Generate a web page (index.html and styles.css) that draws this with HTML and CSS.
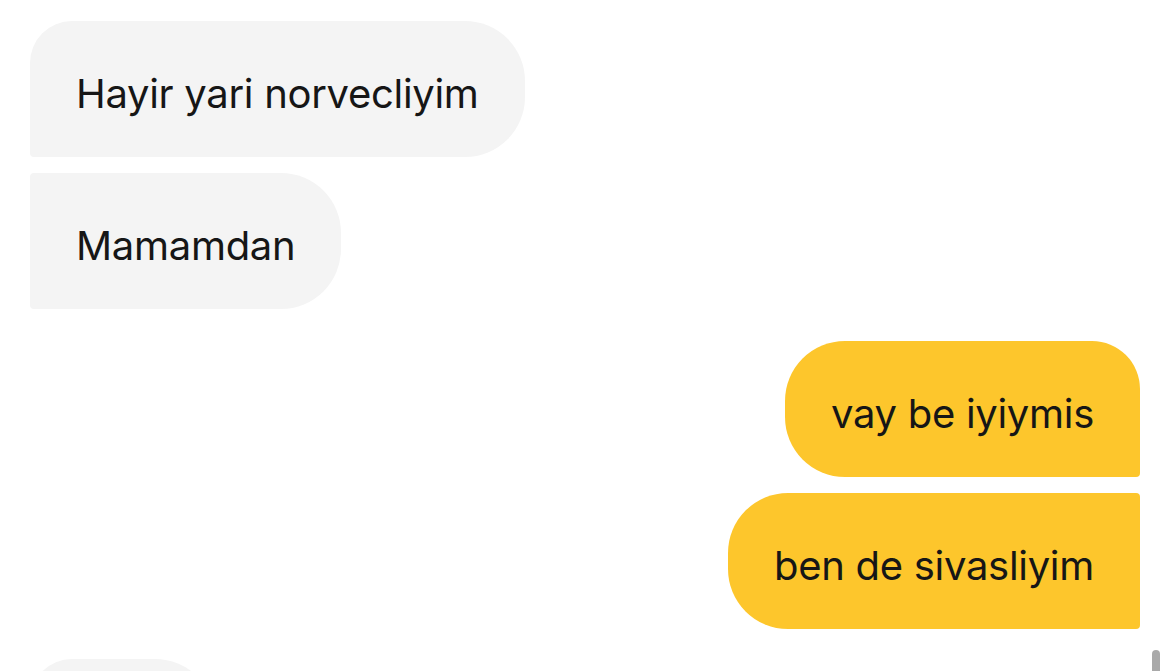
FILE: index.html
```html
<!DOCTYPE html>
<html lang="tr">
<head>
<meta charset="utf-8">
<title>Sohbet</title>
<link rel="stylesheet" href="styles.css">
</head>
<body>
<main class="chat">
  <div class="msg msg-in msg-first">Hayir yari norvecliyim</div>
  <div class="msg msg-in msg-last">Mamamdan</div>
  <div class="msg msg-out msg-first">vay be iyiymis</div>
  <div class="msg msg-out msg-last">ben de sivasliyim</div>
  <div class="msg msg-in msg-first msg-partial"></div>
</main>
<div class="scrollbar"></div>
</body>
</html>
```
FILE: styles.css
```css
html, body {
  margin: 0;
  padding: 0;
  background: #ffffff;
  height: 100%;
  overflow: hidden;
}

.chat {
  display: flex;
  flex-direction: column;
  padding: 21px 29px 0 30px;
  font-family: "Inter", "Noto Sans", sans-serif;
}

.msg {
  box-sizing: border-box;
  height: 136px;
  display: flex;
  align-items: center;
  padding: 8px 46px 0;
  font-size: 40px;
  letter-spacing: -0.3px;
  color: #161616;
  white-space: nowrap;
}

.msg-in {
  align-self: flex-start;
  background: #f4f4f4;
}

.msg-out {
  align-self: flex-end;
  background: #fdc62c;
}

.msg-in.msg-first {
  border-radius: 42px 60px 60px 4px;
  margin-top: 16px;
}
.msg-in.msg-last {
  border-radius: 4px 60px 60px 4px;
  margin-top: 16px;
}
.msg-out.msg-first {
  border-radius: 60px 48px 4px 60px;
  margin-top: 32px;
}
.msg-out.msg-last {
  border-radius: 60px 4px 4px 60px;
  margin-top: 16px;
}

.chat > .msg:first-child {
  margin-top: 0;
}

.msg-partial {
  margin-top: 30px !important;
  width: 185px;
}

.scrollbar {
  position: fixed;
  right: 9px;
  top: 650px;
  width: 8px;
  height: 30px;
  border-radius: 4px;
  background: #a9a9a9;
}
```
